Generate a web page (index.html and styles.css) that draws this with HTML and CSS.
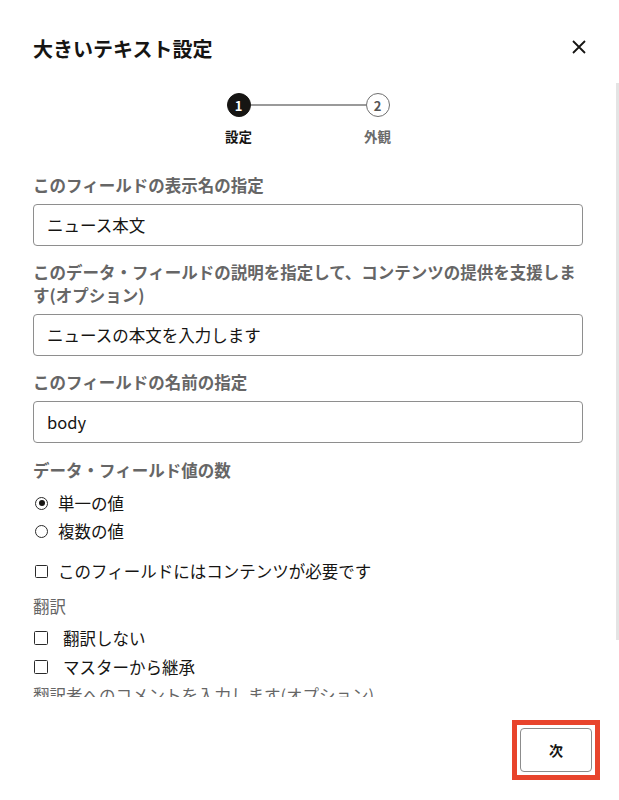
FILE: index.html
```html
<!DOCTYPE html>
<html lang="ja">
<head>
<meta charset="utf-8">
<link rel="stylesheet" href="styles.css">
</head>
<body>
<div class="dialog">
  <div class="header">
    <h1 class="title">大きいテキスト設定</h1>
    <button class="close" aria-label="閉じる">
      <svg width="14" height="14" viewBox="0 0 14 14"><path d="M1 1L13 13M13 1L1 13" stroke="#161513" stroke-width="1.8" fill="none"/></svg>
    </button>
  </div>
  <div class="scroll">
    <div class="stepper">
      <div class="step">
        <span class="dot dot-active">1</span>
        <span class="step-label step-label-active">設定</span>
      </div>
      <div class="step-line"></div>
      <div class="step">
        <span class="dot">2</span>
        <span class="step-label">外観</span>
      </div>
    </div>

    <div class="field">
      <div class="label">このフィールドの表示名の指定</div>
      <div class="input">ニュース本文</div>
    </div>
    <div class="field">
      <div class="label">このデータ・フィールドの説明を指定して、コンテンツの提供を支援します(オプション)</div>
      <div class="input">ニュースの本文を入力します</div>
    </div>
    <div class="field">
      <div class="label">このフィールドの名前の指定</div>
      <div class="input">body</div>
    </div>

    <div class="label label-group">データ・フィールド値の数</div>
    <div class="option"><span class="radio radio-on"></span><span>単一の値</span></div>
    <div class="option"><span class="radio"></span><span>複数の値</span></div>

    <div class="option option-req"><span class="check"></span><span>このフィールドにはコンテンツが必要です</span></div>

    <div class="label-plain">翻訳</div>
    <div class="option option-wide"><span class="check"></span><span>翻訳しない</span></div>
    <div class="option option-wide"><span class="check"></span><span>マスターから継承</span></div>
    <div class="label-plain label-cut">翻訳者へのコメントを入力します(オプション)</div>

    <div class="scrollbar"></div>
  </div>
  <div class="footer">
    <span class="highlight"><button class="next">次</button></span>
  </div>
</div>
</body>
</html>
```

FILE: styles.css
```css
* { box-sizing: border-box; }
html, body { margin: 0; padding: 0; background: #ffffff; }
body {
  font-family: "Noto Sans CJK JP", "Noto Sans", sans-serif;
  color: #161513;
}
.dialog {
  width: 619px;
  height: 800px;
  display: flex;
  flex-direction: column;
  background: #fff;
}
.header {
  display: flex;
  justify-content: space-between;
  align-items: center;
  padding: 35px 33px 0 33px;
  height: 63px;
}
.title {
  margin: 0;
  font-size: 20px;
  line-height: 28px;
  font-weight: 700;
  color: #161513;
}
.close {
  border: 0;
  background: none;
  padding: 0;
  width: 14px;
  height: 14px;
  display: flex;
  margin-top: -5px;
}
.scroll {
  position: relative;
  margin-top: 20px;
  height: 614px;
  overflow: hidden;
  padding: 10px 36px 0 33px;
}
.scrollbar {
  position: absolute;
  right: 0;
  top: 0;
  width: 3px;
  height: 557px;
  background: #e4e4e4;
}
.stepper {
  display: flex;
  justify-content: center;
  align-items: flex-start;
  margin-bottom: 28px;
}
.step {
  width: 24px;
  display: flex;
  flex-direction: column;
  align-items: center;
  gap: 9px;
}
.dot {
  width: 24px;
  height: 24px;
  border-radius: 50%;
  border: 1.5px solid #6f6f6f;
  color: #555;
  font-size: 13px;
  font-weight: 700;
  display: flex;
  align-items: center;
  justify-content: center;
  background: #fff;
}
.dot-active {
  background: #161513;
  border-color: #161513;
  color: #fff;
}
.step-line {
  width: 115px;
  height: 1.5px;
  background: #9a9a9a;
  margin-top: 11px;
}
.step-label {
  white-space: nowrap;
  font-size: 13.5px;
  line-height: 20px;
  font-weight: 700;
  color: #6b6b6b;
}
.step-label-active { color: #161513; }

.field { margin-bottom: 15px; }
.label {
  font-size: 16.5px;
  line-height: 23px;
  font-weight: 700;
  color: #666666;
  margin-bottom: 7px;
}
.input {
  height: 42px;
  border: 1px solid #8e8e8e;
  border-radius: 4px;
  padding: 0 13px;
  display: flex;
  align-items: center;
  font-size: 16.5px;
  color: #161513;
}
.label-group { margin-top: 16px; margin-bottom: 7px; }
.option {
  display: flex;
  align-items: center;
  height: 28px;
  font-size: 16.5px;
  color: #161513;
  gap: 10px;
  padding-left: 2px;
}
.option-req { margin-top: 12px; }
.option-wide { gap: 15px; padding-left: 1px; height: 29px; }
.radio {
  width: 13px;
  height: 13px;
  border-radius: 50%;
  border: 1.3px solid #2a2a2a;
  display: flex;
  align-items: center;
  justify-content: center;
  flex: none;
}
.radio-on::after {
  content: "";
  width: 6px;
  height: 6px;
  border-radius: 50%;
  background: #161513;
}
.check {
  width: 13px;
  height: 13px;
  border: 1.4px solid #2a2a2a;
  border-radius: 1.5px;
  flex: none;
}
.option-wide .check { width: 14px; height: 14px; }
.label-plain {
  font-size: 16.5px;
  line-height: 23px;
  color: #666;
  margin-top: 10px;
  margin-bottom: 5px;
}
.label-cut { margin-top: 3px; }
.footer {
  flex: 1;
  display: flex;
  justify-content: flex-end;
  align-items: flex-start;
  padding: 23px 19px 0 0;
}
.highlight {
  display: flex;
  border: 5px solid #e8442c;
  padding: 3px;
}
.next {
  width: 72px;
  height: 44px;
  border: 1px solid #8c8c8c;
  border-radius: 4px;
  background: #fff;
  font-family: "Noto Sans CJK JP", sans-serif;
  font-size: 14px;
  font-weight: 700;
  color: #161513;
}
```
